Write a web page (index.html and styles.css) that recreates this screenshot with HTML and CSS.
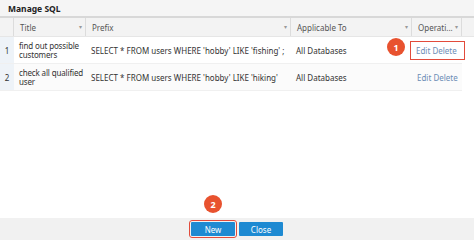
FILE: index.html
```html
<!DOCTYPE html>
<html>
<head>
<meta charset="utf-8">
<link rel="stylesheet" href="styles.css">
</head>
<body>
<div class="dialog">
  <div class="titlebar">Manage SQL</div>
  <div class="main">
    <div class="grid head">
      <div class="cell num"></div>
      <div class="cell hcell"><span>Title</span><span class="arr">&#9662;</span></div>
      <div class="cell hcell"><span>Prefix</span><span class="arr">&#9662;</span></div>
      <div class="cell hcell"><span>Applicable To</span><span class="arr">&#9662;</span></div>
      <div class="cell hcell op"><span>Operati...</span><span class="arr">&#9662;</span></div>
    </div>
    <div class="grid row">
      <div class="cell num">1</div>
      <div class="cell title">find out possible customers</div>
      <div class="cell">SELECT * FROM users WHERE 'hobby' LIKE 'fishing' ;</div>
      <div class="cell">All Databases</div>
      <div class="cell ops"><span class="hl">Edit Delete</span></div>
    </div>
    <div class="grid row alt">
      <div class="cell num">2</div>
      <div class="cell title">check all qualified user</div>
      <div class="cell">SELECT * FROM users WHERE 'hobby' LIKE 'hiking'</div>
      <div class="cell">All Databases</div>
      <div class="cell ops"><span class="plain">Edit Delete</span></div>
    </div>
    <div class="badge b1">1</div>
  </div>
  <div class="footer">
    <button class="btn new">New</button>
    <button class="btn">Close</button>
    <div class="badge b2">2</div>
  </div>
</div>
</body>
</html>
```

FILE: styles.css
```css
html, body {
  margin: 0;
  padding: 0;
  background: #ffffff;
}
body {
  font-family: "Noto Sans", "Open Sans", sans-serif;
  font-size: 8px;
  color: #333333;
}
.dialog {
  width: 474px;
  height: 240px;
  display: flex;
  flex-direction: column;
  overflow: hidden;
}
.titlebar {
  height: 16px;
  line-height: 17px;
  padding-left: 8px;
  font-weight: bold;
  font-size: 8.5px;
  color: #222;
  background: #f5f5f5;
  border-bottom: 2px solid #d8d8d8;
}
.main {
  flex: 1;
  position: relative;
  background: #fff;
}
.grid {
  display: grid;
  grid-template-columns: 14px 72px 205px 121px 50px;
  width: 462px;
}
.head {
  height: 18px;
  width: 474px;
  grid-template-columns: 14px 72px 205px 121px 50px 12px;
  background: #f3f3f3;
  border-bottom: 1px solid #e6e6e6;
  color: #555;
}
.cell {
  display: flex;
  align-items: center;
  padding-left: 5px;
  white-space: nowrap;
  overflow: hidden;
}
.head .cell {
  border-right: 1px solid #dcdcdc;
}
.hcell {
  justify-content: space-between;
  padding-left: 6px;
  padding-right: 3px;
}
.arr {
  font-size: 6px;
  color: #999;
}
.row {
  height: 26px;
  border-bottom: 1px solid #f0f0f0;
}
.row.alt {
  background: #fbfbfb;
}
.num {
  justify-content: center;
  padding-left: 0;
  background: #eef3f8;
}
.head .num {
  background: #f3f3f3;
}
.title {
  white-space: normal;
  line-height: 9px;
  letter-spacing: -0.15px;
  padding-left: 5px;
  padding-right: 0;
}
.ops {
  padding-left: 0;
  justify-content: flex-start;
  color: #6b8db5;
  overflow: visible;
}
.hl {
  border: 1.5px solid #e24b3b;
  padding: 3px 7px 3px 5px;
  margin-left: -2px;
  white-space: nowrap;
}
.plain {
  padding-left: 5px;
}
.badge {
  position: absolute;
  width: 18px;
  height: 18px;
  border-radius: 50%;
  background: #e8522f;
  color: #fff;
  font-weight: bold;
  font-size: 9px;
  display: flex;
  align-items: center;
  justify-content: center;
}
.b1 {
  left: 387px;
  top: 20px;
}
.footer {
  height: 22px;
  background: #f1f1f1;
  display: flex;
  justify-content: center;
  align-items: center;
  gap: 4px;
  position: relative;
}
.btn {
  font-family: "Noto Sans", "Open Sans", sans-serif;
  font-size: 8px;
  color: #fff;
  background: #1e8ad2;
  border: none;
  border-radius: 1px;
  width: 44px;
  height: 14px;
  padding: 0;
}
.new {
  outline: 1.5px solid #e24b3b;
  outline-offset: 1px;
}
.b2 {
  left: 204px;
  top: -23px;
}
```
